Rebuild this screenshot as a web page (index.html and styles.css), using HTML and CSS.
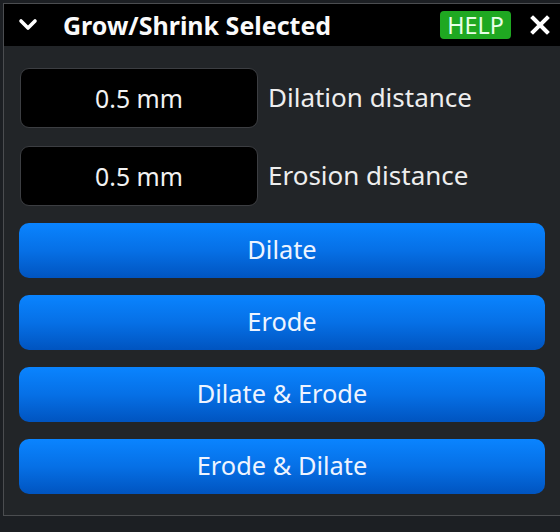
FILE: index.html
```html
<!DOCTYPE html>
<html>
<head>
<meta charset="utf-8">
<link rel="stylesheet" href="styles.css">
</head>
<body>
<div class="panel">
  <div class="header">
    <svg class="chev" width="20" height="14" viewBox="0 0 20 14"><polyline points="3,3 10,10 17,3" fill="none" stroke="#fff" stroke-width="3.6" stroke-linecap="round" stroke-linejoin="round"/></svg>
    <div class="title">Grow/Shrink Selected</div>
    <div class="help">HELP</div>
    <svg class="close" width="20" height="20" viewBox="0 0 20 20"><path d="M3 3 L17 17 M17 3 L3 17" stroke="#fff" stroke-width="4" stroke-linecap="square"/></svg>
  </div>
  <div class="body">
    <div class="row">
      <div class="input">0.5 mm</div>
      <div class="label">Dilation distance</div>
    </div>
    <div class="row">
      <div class="input">0.5 mm</div>
      <div class="label">Erosion distance</div>
    </div>
    <div class="btn">Dilate</div>
    <div class="btn">Erode</div>
    <div class="btn">Dilate &amp; Erode</div>
    <div class="btn">Erode &amp; Dilate</div>
  </div>
</div>
</body>
</html>
```
FILE: styles.css
```css
html, body {
  margin: 0;
  padding: 0;
  background: #1c1f23;
  overflow: hidden;
  font-family: "Noto Sans", "Open Sans", sans-serif;
  color: #f0f0f0;
}
.panel {
  margin: 3px 0 0 3px;
  width: 556px;
  border: 1px solid #4b4d50;
  background: #222528;
}
.header {
  height: 42px;
  background: #000;
  display: flex;
  align-items: center;
  padding-left: 14px;
}
.chev {
  display: block;
}
.title {
  margin-left: 25px;
  font-size: 25px;
  font-weight: 700;
  color: #fafafa;
}
.help {
  margin-left: auto;
  background: #1fa821;
  color: #e8ffe8;
  border-radius: 4px;
  height: 28px;
  width: 71px;
  display: flex;
  align-items: center;
  justify-content: center;
  font-size: 23.3px;
  line-height: 28px;
}
.close {
  display: block;
  margin-left: 19px;
  margin-right: 10px;
}
.body {
  padding: 22px 15px 21px 15px;
  display: flex;
  flex-direction: column;
  gap: 17px;
}
.row {
  display: flex;
  align-items: center;
  gap: 10px;
  margin-left: 1px;
}
.row + .row {
  margin-top: 1px;
}
.input {
  width: 236px;
  height: 58px;
  box-sizing: content-box;
  background: #000;
  border: 1px solid #3c3e42;
  border-radius: 9px;
  display: flex;
  align-items: center;
  justify-content: center;
  font-size: 24.8px;
  color: #f2f2f2;
  padding-bottom: 0;
  line-height: 1;
}
.label {
  font-size: 26px;
  color: #eeeeee;
  padding-bottom: 2px;
}
.btn {
  height: 55px;
  box-sizing: border-box;
  padding-bottom: 3px;
  border-radius: 10px;
  background: linear-gradient(to bottom, #0a84ff 0%, #0670e6 50%, #0054c0 100%);
  display: flex;
  align-items: center;
  justify-content: center;
  font-size: 25.4px;
  color: #eef4ff;
}
```
